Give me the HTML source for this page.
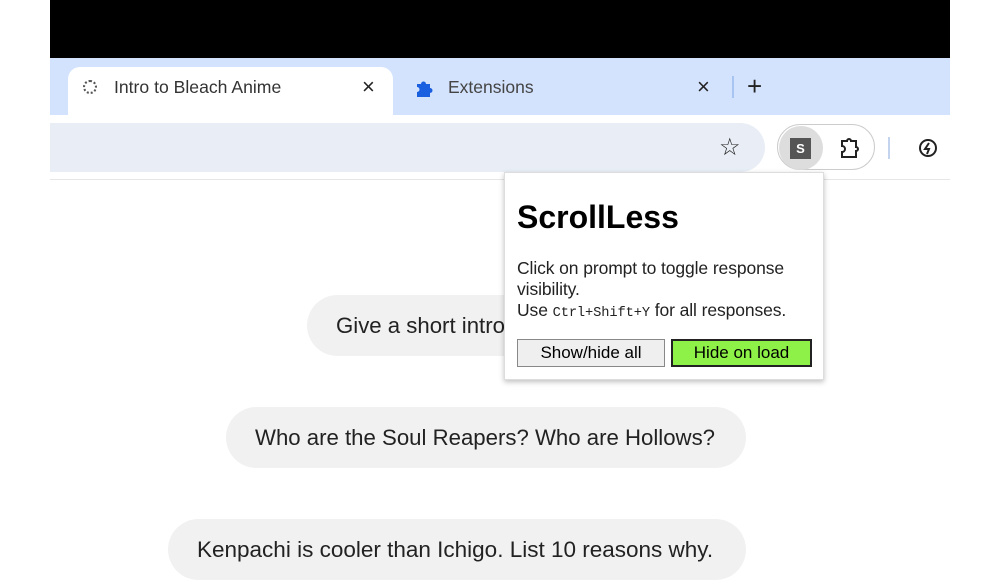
<!DOCTYPE html>
<html><head><style>
body{margin:0;width:1000px;height:563px;background:#fff;position:relative;overflow:hidden;font-family:"Liberation Sans",sans-serif}
.a{position:absolute}
.bub{position:absolute;background:#f1f1f1;border-radius:31px;height:61px;line-height:61px;font-size:22.2px;color:#222;padding:0 29px;box-sizing:border-box;white-space:nowrap;overflow:hidden}
</style></head><body>
<div class="a" style="left:50px;top:0;width:900px;height:58px;background:#000"></div>
<div class="a" style="left:50px;top:58px;width:900px;height:57px;background:#d3e3fd"></div>
<div class="a" style="left:68px;top:67px;width:325px;height:60px;background:#fff;border-radius:12px 12px 0 0"></div>
<div class="a" style="left:83px;top:80px;width:14px;height:14px;border-radius:50%;border:2px dotted #555;box-sizing:border-box"></div>
<div class="a" style="left:114px;top:77px;font-size:17.6px;color:#333">Intro to Bleach Anime</div>
<div class="a" style="left:362px;top:74px;font-size:22px;color:#222">×</div>
<svg class="a" style="left:414px;top:78px" width="20" height="20" viewBox="0 0 20 20"><path d="M3 6h4a2.5 2.5 0 0 1 5 0h4v4a2.5 2.5 0 0 1 0 5v4H3v-5a2.5 2.5 0 0 0 0-5z" fill="#1a5fe0"/></svg>
<div class="a" style="left:448px;top:77px;font-size:17.5px;color:#444">Extensions</div>
<div class="a" style="left:697px;top:74px;font-size:22px;color:#222">×</div>
<div class="a" style="left:732px;top:76px;width:2px;height:22px;background:#a8c4f0"></div>
<div class="a" style="left:747px;top:71px;font-size:26px;color:#222">+</div>
<div class="a" style="left:50px;top:123px;width:715px;height:49px;background:#e9eef6;border-radius:0 25px 25px 0"></div>
<div class="a" style="left:719px;top:133px;font-size:24px;color:#222">☆</div>
<div class="a" style="left:777px;top:124px;width:98px;height:46px;border:1px solid #ccc;border-radius:24px;box-sizing:border-box"></div>
<div class="a" style="left:779px;top:126px;width:44px;height:44px;background:#ddd;border-radius:50%"></div>
<div class="a" style="left:790px;top:138px;width:21px;height:21px;background:#555;color:#fff;font-size:13px;font-weight:bold;text-align:center;line-height:21px">S</div>
<svg class="a" style="left:839px;top:137px" width="24" height="22" viewBox="0 0 24 22"><path d="M3 4h5a2 2 0 0 1 4 0h5v6a2 2 0 0 1 0 4v6H3v-5a2 2 0 0 0 0-6z" fill="none" stroke="#222" stroke-width="2"/></svg>
<div class="a" style="left:888px;top:137px;width:2px;height:22px;background:#c4d4ee"></div>
<svg class="a" style="left:917px;top:137px" width="22" height="22" viewBox="0 0 22 22"><circle cx="11" cy="11" r="8" fill="none" stroke="#222" stroke-width="2"/><path d="M12 6l-4 6h4l-2 5" fill="none" stroke="#222" stroke-width="2"/></svg>
<div class="a" style="left:50px;top:179px;width:900px;height:1px;background:#e6e6e6"></div>
<div class="bub" style="left:307px;top:295px;width:440px">Give a short intro to Bleach anime</div>
<div class="bub" style="left:226px;top:407px;width:520px">Who are the Soul Reapers? Who are Hollows?</div>
<div class="bub" style="left:168px;top:519px;width:578px;font-size:22.5px">Kenpachi is cooler than Ichigo. List 10 reasons why.</div>
<div class="a" style="left:504px;top:172px;width:320px;height:208px;background:#fff;border:1px solid #ddd;box-shadow:0 2px 5px rgba(0,0,0,.25);box-sizing:border-box">
<div class="a" style="left:12px;top:26px;font-size:32px;font-weight:bold;color:#000">ScrollLess</div>
<div class="a" style="left:12px;top:85px;font-size:17.5px;line-height:21px;color:#222;width:295px;letter-spacing:-0.1px">Click on prompt to toggle response visibility.<br>Use <span style="font-family:'Liberation Mono',monospace;font-size:13.7px">Ctrl+Shift+Y</span> for all responses.</div>
<div class="a" style="left:12px;top:166px;width:148px;height:28px;background:#efefef;border:1px solid #888;box-sizing:border-box;font-size:17px;text-align:center;line-height:26px;color:#000">Show/hide all</div>
<div class="a" style="left:166px;top:166px;width:141px;height:28px;background:#8ef147;border:2px solid #222;box-sizing:border-box;font-size:17px;text-align:center;line-height:24px;color:#000">Hide on load</div>
</div>
</body></html>
